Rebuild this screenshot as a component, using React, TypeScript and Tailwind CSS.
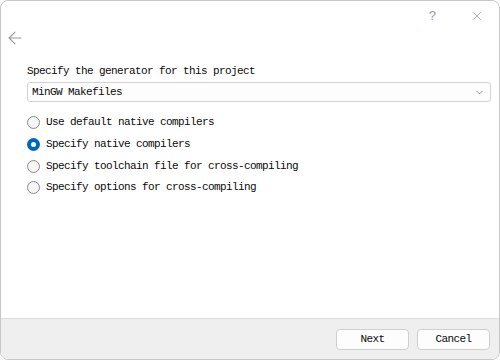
import { ArrowLeft, ChevronDown, X } from 'lucide-react';

const mono = { fontFamily: '"Liberation Mono", "Noto Sans CJK SC", monospace' };

const options = [
  'Use default native compilers',
  'Specify native compilers',
  'Specify toolchain file for cross-compiling',
  'Specify options for cross-compiling',
];

function Radio({ checked }: { checked: boolean }) {
  if (checked) {
    return (
      <span className="w-[13px] h-[13px] rounded-full bg-[#0067c0] flex items-center justify-center shrink-0">
        <span className="w-[5px] h-[5px] rounded-full bg-white" />
      </span>
    );
  }
  return (
    <span className="w-[13px] h-[13px] rounded-full border border-[#8a8a8a] bg-[#f6f6f6] shrink-0" />
  );
}

export default function App() {
  const selected = 1;

  return (
    <div
      className="w-[500px] h-[360px] bg-white rounded-[8px] border border-[#c6c6c6] overflow-hidden flex flex-col text-[11px] tracking-[-0.6px] text-[#0a0a0a]"
      style={mono}
    >
      {/* title bar */}
      <div className="h-[29px] flex items-center justify-end shrink-0">
        <span className="text-[13px] text-[#9a9a9a] mr-[34px] leading-none tracking-normal" style={{ fontFamily: '"Liberation Sans", sans-serif' }}>?</span>
        <X className="w-[14px] h-[14px] text-[#8f8f8f] mr-[15px]" strokeWidth={1.2} />
      </div>

      <div className="h-[16px] flex items-center pl-[4px] shrink-0">
        <ArrowLeft className="w-[20px] h-[20px] text-[#999999]" strokeWidth={1.3} />
      </div>

      <div className="flex-1 pl-[26px] pr-[8px] pt-[18px]">
        <div className="leading-[14px] h-[14px]">Specify the generator for this project</div>

        <div className="mt-[4px] h-[20px] border border-[#d2d2d2] rounded-[3px] bg-[#fdfdfd] flex items-center pl-[4px] pr-[5px]">
          <span className="flex-1 leading-none">MinGW Makefiles</span>
          <ChevronDown className="w-[11px] h-[11px] text-[#606060]" strokeWidth={1.4} />
        </div>

        <div className="mt-[10px] flex flex-col">
          {options.map((o, i) => (
            <div key={o} className="h-[21.7px] flex items-center gap-[6px]">
              <Radio checked={i === selected} />
              <span className="leading-none">{o}</span>
            </div>
          ))}
        </div>
      </div>

      {/* footer */}
      <div className="h-[41px] shrink-0 bg-[#efefef] border-t border-[#dcdcdc] flex items-center justify-end gap-[8px] pr-[9px]">
        <button className="w-[73px] h-[21px] bg-[#fdfdfd] border border-[#cfcfcf] rounded-[4px] leading-none">Next</button>
        <button className="w-[73px] h-[21px] bg-[#fdfdfd] border border-[#cfcfcf] rounded-[4px] leading-none">Cancel</button>
      </div>
    </div>
  );
}
